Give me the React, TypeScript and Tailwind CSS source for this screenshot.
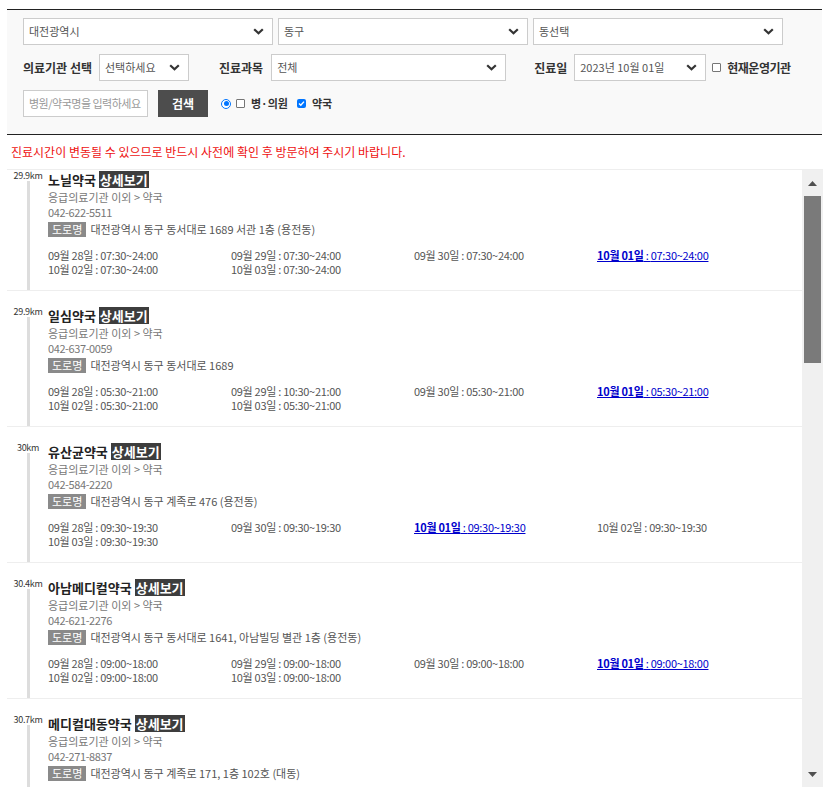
import React from "react";

type T = { d: string; t: string; link?: boolean };
type Item = { dist: string; name: string; phone: string; addr: string; times: T[] };

const items: Item[] = [
  {
    dist: "29.9km",
    name: "노닐약국",
    phone: "042-622-5511",
    addr: "대전광역시 동구 동서대로 1689 서관 1층 (용전동)",
    times: [
      { d: "09월 28일", t: "07:30~24:00" },
      { d: "09월 29일", t: "07:30~24:00" },
      { d: "09월 30일", t: "07:30~24:00" },
      { d: "10월 01일", t: "07:30~24:00", link: true },
      { d: "10월 02일", t: "07:30~24:00" },
      { d: "10월 03일", t: "07:30~24:00" },
    ],
  },
  {
    dist: "29.9km",
    name: "일심약국",
    phone: "042-637-0059",
    addr: "대전광역시 동구 동서대로 1689",
    times: [
      { d: "09월 28일", t: "05:30~21:00" },
      { d: "09월 29일", t: "10:30~21:00" },
      { d: "09월 30일", t: "05:30~21:00" },
      { d: "10월 01일", t: "05:30~21:00", link: true },
      { d: "10월 02일", t: "05:30~21:00" },
      { d: "10월 03일", t: "05:30~21:00" },
    ],
  },
  {
    dist: "30km",
    name: "유산균약국",
    phone: "042-584-2220",
    addr: "대전광역시 동구 계족로 476 (용전동)",
    times: [
      { d: "09월 28일", t: "09:30~19:30" },
      { d: "09월 30일", t: "09:30~19:30" },
      { d: "10월 01일", t: "09:30~19:30", link: true },
      { d: "10월 02일", t: "09:30~19:30" },
      { d: "10월 03일", t: "09:30~19:30" },
    ],
  },
  {
    dist: "30.4km",
    name: "아남메디컬약국",
    phone: "042-621-2276",
    addr: "대전광역시 동구 동서대로 1641, 아남빌딩 별관 1층 (용전동)",
    times: [
      { d: "09월 28일", t: "09:00~18:00" },
      { d: "09월 29일", t: "09:00~18:00" },
      { d: "09월 30일", t: "09:00~18:00" },
      { d: "10월 01일", t: "09:00~18:00", link: true },
      { d: "10월 02일", t: "09:00~18:00" },
      { d: "10월 03일", t: "09:00~18:00" },
    ],
  },
  {
    dist: "30.7km",
    name: "메디컬대동약국",
    phone: "042-271-8837",
    addr: "대전광역시 동구 계족로 171, 1층 102호 (대동)",
    times: [
      { d: "09월 28일", t: "09:00~18:00" },
      { d: "09월 29일", t: "09:00~18:00" },
      { d: "09월 30일", t: "09:00~18:00" },
      { d: "10월 01일", t: "09:00~18:00", link: true },
    ],
  },
];

function Chevron() {
  return (
    <svg width="11" height="7" viewBox="0 0 11 7" className="shrink-0">
      <path d="M1.2 1.2 L5.5 5.3 L9.8 1.2" fill="none" stroke="#333" strokeWidth="2.2" />
    </svg>
  );
}

function Select({ text, cls }: { text: string; cls: string }) {
  return (
    <div
      className={
        "flex h-[27px] items-center justify-between border border-[#cccccc] bg-white pl-[5px] pr-[8px] text-[11px] text-[#555] " +
        cls
      }
    >
      <span>{text}</span>
      <Chevron />
    </div>
  );
}

function Box({ checked }: { checked?: boolean }) {
  if (checked)
    return (
      <span className="flex h-[9px] w-[9px] items-center justify-center rounded-[2px] bg-[#0075ff]">
        <svg width="7" height="7" viewBox="0 0 7 7">
          <path d="M1 3.6 L2.8 5.3 L6 1.6" fill="none" stroke="white" strokeWidth="1.4" />
        </svg>
      </span>
    );
  return <span className="block h-[9px] w-[9px] rounded-[1px] border border-[#767676] bg-white" />;
}

function Radio() {
  return (
    <span className="flex h-[10px] w-[10px] items-center justify-center rounded-full border-[1.5px] border-[#0075ff] bg-white">
      <span className="block h-[5px] w-[5px] rounded-full bg-[#0075ff]" />
    </span>
  );
}

function ListItem({ it }: { it: Item }) {
  return (
    <div className="relative border-b border-[#eeeeee] pb-[14px] pl-[41px] pt-[16px]">
      <div className="absolute bottom-0 left-[20px] top-[26px] w-[3px] bg-[#dddddd]" />
      <div className="absolute left-0 top-[16px] w-[42px] text-center text-[9px] leading-[9px] tracking-[-0.3px] text-[#333]">
        {it.dist}
      </div>
      <div className="flex h-[17px] items-center gap-[3px]">
        <span className="text-[13px] font-bold text-[#222]">{it.name}</span>
        <span className="h-[17px] bg-[#3d3d3d] px-[1px] text-[13px] font-bold leading-[17px] text-white">
          상세보기
        </span>
      </div>
      <div className="mt-[2px] text-[11px] leading-[15px] text-[#777]">
        응급의료기관 이외 &gt; 약국
      </div>
      <div className="text-[11px] leading-[15px] tracking-[-0.4px] text-[#777]">{it.phone}</div>
      <div className="mt-[2px] flex h-[15px] items-center gap-[4px]">
        <span className="bg-[#8a8a8a] px-[4px] text-[11px] leading-[15px] text-white">도로명</span>
        <span className="text-[11px] leading-[15px] text-[#555]">{it.addr}</span>
      </div>
      <div className="mt-[11px] grid grid-cols-[repeat(4,183px)] text-[11px] leading-[14px] tracking-[-0.3px] text-[#555]">
        {it.times.map((x, i) =>
          x.link ? (
            <div key={i}>
              <span className="text-[#0000cc] underline">
                <b>{x.d}</b> : {x.t}
              </span>
            </div>
          ) : (
            <div key={i}>
              {x.d} : {x.t}
            </div>
          )
        )}
      </div>
    </div>
  );
}

export default function App() {
  return (
    <div className="min-h-[798px] bg-white pl-[7px] pt-[9px] font-['Noto_Sans_CJK_KR',sans-serif]">
      <div className="w-[815px] border-y border-[#222] bg-[#f9f9f9] pb-[17px] pl-[16px] pt-[8px]">
        <div className="flex gap-[5px]">
          <Select text="대전광역시" cls="w-[250px]" />
          <Select text="동구" cls="w-[250px]" />
          <Select text="동선택" cls="w-[250px]" />
        </div>
        <div className="mt-[9px] flex items-center text-[12px] font-semibold text-[#333]">
          <span>의료기관 선택</span>
          <Select text="선택하세요" cls="ml-[7px] w-[90px] font-normal" />
          <span className="ml-[30px]">진료과목</span>
          <Select text="전체" cls="ml-[8px] w-[235px] font-normal" />
          <span className="ml-[28px]">진료일</span>
          <Select text="2023년 10월 01일" cls="ml-[7px] w-[132px] font-normal" />
          <span className="ml-[6px]">
            <Box />
          </span>
          <span className="ml-[6px] tracking-[-0.5px]">현재운영기관</span>
        </div>
        <div className="mt-[9px] flex items-center text-[11px] font-semibold text-[#333]">
          <div className="flex h-[27px] w-[125px] items-center border border-[#cccccc] bg-white pl-[5px] text-[11px] font-normal tracking-[-0.5px] text-[#999]">
            병원/약국명을 입력하세요
          </div>
          <button className="ml-[10px] h-[27px] w-[50px] bg-[#4d4d4d] text-[12px] font-bold text-white">
            검색
          </button>
          <span className="ml-[13px]">
            <Radio />
          </span>
          <span className="ml-[5px]">
            <Box />
          </span>
          <span className="ml-[6px] font-bold">병·의원</span>
          <span className="ml-[9px]">
            <Box checked />
          </span>
          <span className="ml-[6px] font-bold">약국</span>
        </div>
      </div>
      <div className="py-[10px] pl-[4px] text-[12px] leading-[14px] text-[#ee1111]">
        진료시간이 변동될 수 있으므로 반드시 사전에 확인 후 방문하여 주시기 바랍니다.
      </div>
      <div className="flex h-[618px] w-[816px] border-t border-[#eeeeee]">
        <div className="flex-1 overflow-hidden">
          <div className="-mt-[15px]">
            {items.map((it, i) => (
              <ListItem key={i} it={it} />
            ))}
          </div>
        </div>
        <div className="flex w-[21px] flex-col bg-[#f0f0f0]">
          <div className="flex h-[26px] items-center justify-center">
            <svg width="9" height="5" viewBox="0 0 9 5">
              <path d="M0 5 L4.5 0 L9 5 Z" fill="#505050" />
            </svg>
          </div>
          <div className="ml-[2px] h-[167px] w-[17px] bg-[#7a7a7a]" />
          <div className="flex-1" />
          <div className="flex h-[26px] items-center justify-center">
            <svg width="9" height="5" viewBox="0 0 9 5">
              <path d="M0 0 L9 0 L4.5 5 Z" fill="#505050" />
            </svg>
          </div>
        </div>
      </div>
    </div>
  );
}
